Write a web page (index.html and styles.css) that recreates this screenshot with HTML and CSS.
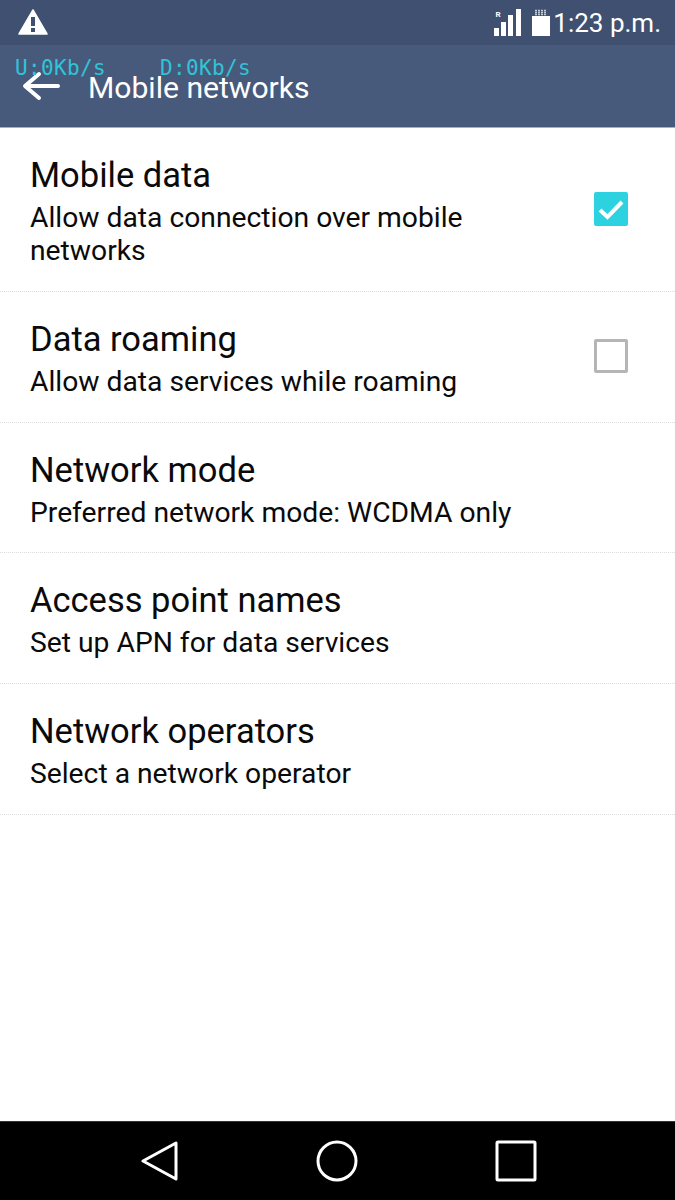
FILE: index.html
```html
<!DOCTYPE html>
<html lang="en">
<head>
    <meta charset="UTF-8">
    <meta name="viewport" content="width=device-width, initial-scale=1.0">
    <title>Mobile networks</title>
    <link rel="stylesheet" href="styles.css">
</head>
<body>
    <div class="phone">
        <div class="status-bar">
            <svg class="warn-icon" width="30" height="26" viewBox="0 0 30 26">
                <path d="M15 1 L29 25 L1 25 Z" fill="#fff" stroke="#fff" stroke-width="1.5" stroke-linejoin="round"/>
                <rect x="13" y="8" width="4" height="9" fill="#3f5070"/>
                <rect x="13" y="19" width="4" height="4" fill="#3f5070"/>
            </svg>
            <div class="status-right">
                <svg class="signal-icon" width="28" height="27" viewBox="0 0 28 27">
                    <text x="1.5" y="8" class="roaming">R</text>
                    <rect x="0" y="19" width="5" height="8" fill="#fff"/>
                    <rect x="7" y="13" width="5" height="14" fill="#fff"/>
                    <rect x="14" y="6" width="5" height="21" fill="#fff"/>
                    <rect x="22" y="0" width="5" height="27" fill="#fff"/>
                </svg>
                <svg class="battery-icon" width="18" height="27" viewBox="0 0 18 27">
                    <path d="M3 1.5 H15 M3 3.5 H15 M3 5.5 H15" stroke="#c3c9d4" stroke-width="1.5" stroke-dasharray="2 1"/>
                    <rect x="0" y="7" width="18" height="20" fill="#fff"/>
                </svg>
                <span class="clock">1:23 p.m.</span>
            </div>
        </div>
        <div class="toolbar">
            <svg class="back-icon" width="38" height="30" viewBox="0 0 38 30">
                <path d="M36 15 H4 M17 3 L3 15 L17 27" fill="none" stroke="#fff" stroke-width="4" stroke-linecap="round" stroke-linejoin="round"/>
            </svg>
            <span class="toolbar-title">Mobile networks</span>
            <div class="net-meter">
                <span>U:0Kb/s</span>
                <span>D:0Kb/s</span>
            </div>
        </div>
        <div class="settings">
            <div class="row row-tall">
                <div class="row-text">
                    <div class="row-title">Mobile data</div>
                    <div class="row-sub">Allow data connection over mobile networks</div>
                </div>
                <div class="check check-on">
                    <svg width="34" height="34" viewBox="0 0 34 34">
                        <path d="M6 18 L13.500 25 L28 10" fill="none" stroke="#fff" stroke-width="4"/>
                    </svg>
                </div>
            </div>
            <div class="row">
                <div class="row-text">
                    <div class="row-title">Data roaming</div>
                    <div class="row-sub">Allow data services while roaming</div>
                </div>
                <div class="check check-off"></div>
            </div>
            <div class="row">
                <div class="row-text">
                    <div class="row-title">Network mode</div>
                    <div class="row-sub">Preferred network mode: WCDMA only</div>
                </div>
            </div>
            <div class="row">
                <div class="row-text">
                    <div class="row-title">Access point names</div>
                    <div class="row-sub">Set up APN for data services</div>
                </div>
            </div>
            <div class="row">
                <div class="row-text">
                    <div class="row-title">Network operators</div>
                    <div class="row-sub">Select a network operator</div>
                </div>
            </div>
        </div>
        <div class="nav-bar">
            <svg width="38" height="40" viewBox="0 0 38 40">
                <path d="M35 2 V38 L2 20 Z" fill="none" stroke="#fff" stroke-width="3" stroke-linejoin="round"/>
            </svg>
            <svg width="42" height="42" viewBox="0 0 42 42">
                <circle cx="21" cy="21" r="19" fill="none" stroke="#fff" stroke-width="3"/>
            </svg>
            <svg width="42" height="42" viewBox="0 0 42 42">
                <rect x="2" y="2" width="38" height="38" rx="1" fill="none" stroke="#fff" stroke-width="3"/>
            </svg>
        </div>
    </div>
</body>
</html>
```

FILE: styles.css
```css
body {
    margin: 0;
    background-color: #fff;
    font-family: Roboto, "Liberation Sans", sans-serif;
    color: #0a0a0a;
}
.phone {
    width: 675px;
    height: 1200px;
    display: flex;
    flex-direction: column;
    overflow: hidden;
}
.status-bar {
    height: 45px;
    background-color: #3f5070;
    display: flex;
    align-items: center;
    justify-content: space-between;
    padding: 0 14px 0 18px;
    flex-shrink: 0;
}
.warn-icon {
    margin-top: -1px;
}
.status-right {
    display: flex;
    align-items: center;
}
.signal-icon {
    margin-right: 10px;
}
.roaming {
    font-family: Roboto, sans-serif;
    font-size: 8px;
    font-weight: 700;
    fill: #fff;
}
.battery-icon {
    margin-right: 3px;
}
.clock {
    color: #fff;
    font-size: 26px;
}
.toolbar {
    position: relative;
    height: 82px;
    background-color: #485a7c;
    border-bottom: 1px solid #a9afbc;
    display: flex;
    align-items: center;
    padding-left: 22px;
    flex-shrink: 0;
}
.back-icon {
    margin-right: 29px;
    margin-top: -1px;
}
.toolbar-title {
    color: #fff;
    font-size: 30.1px;
    margin-left: -1px;
    margin-top: 2px;
}
/* traffic meter drawn on top of the toolbar by another app */
.net-meter {
    position: absolute;
    left: 15px;
    top: 10px;
    display: flex;
    gap: 54px;
    font-family: "DejaVu Sans Mono", monospace;
    font-size: 21px;
    letter-spacing: 0.35px;
    line-height: 26px;
    color: #2fc4d6;
}
.settings {
    flex: 1;
}
.row {
    height: 129.67px;
    border-bottom: 1px dotted #dcdcdc;
    display: flex;
    justify-content: space-between;
    padding: 0 47px 0 30px;
}
.row-tall {
    height: 163px;
}
.row-text {
    padding-top: 26px;
    width: 500px;
}
.row-title {
    font-size: 34.5px;
    line-height: 42px;
}
.row-sub {
    font-size: 28.25px;
    line-height: 33px;
    margin-top: 5px;
}
.check {
    width: 34px;
    height: 34px;
    box-sizing: border-box;
    border-radius: 2px;
    margin-top: 47px;
}
.check-on {
    background-color: #2cd2e0;
    margin-top: 64px;
}
.check-off {
    border: 3px solid #b5b5b5;
}
.nav-bar {
    height: 78px;
    background-color: #000;
    border-top: 1px solid #333;
    display: flex;
    align-items: center;
    justify-content: space-between;
    padding: 0 138px 0 141px;
    flex-shrink: 0;
}
```
